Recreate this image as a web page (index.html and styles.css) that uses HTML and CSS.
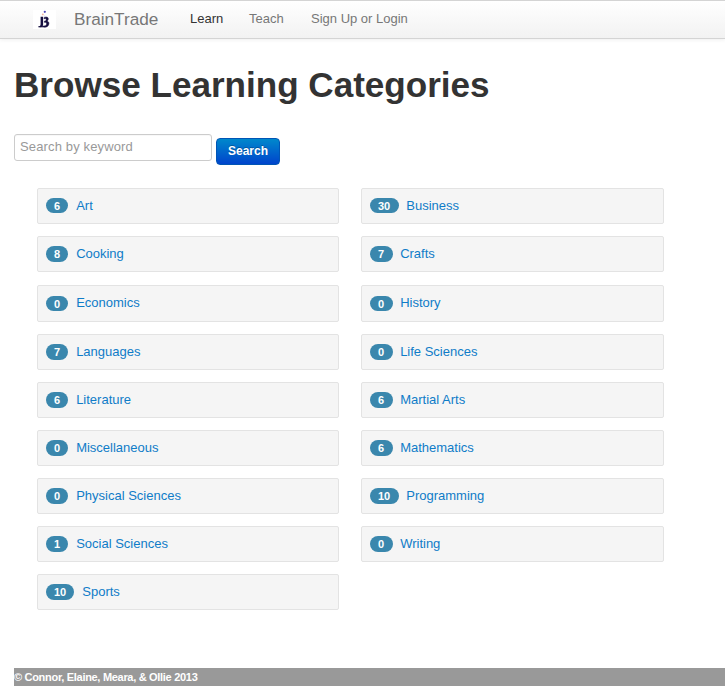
FILE: index.html
```html
<!DOCTYPE html>
<html lang="en">
<head>
<meta charset="utf-8">
<title>BrainTrade</title>
<link rel="stylesheet" href="styles.css">
</head>
<body>
<nav class="navbar">
  <svg class="logo" viewBox="0 0 23 19" aria-hidden="true">
    <rect width="23" height="19" fill="#fff"/>
    <path d="M7.6 6.7h2.5v7.8c0 2-1.7 3-4.2 2.6 1.1-.9 1.7-1.4 1.7-3z" fill="#160f40"/>
    <path d="M5.4 16.1h6.5v1.2H5.4z" fill="#160f40"/>
    <path d="M11 7.7c2-1.4 4.6-.7 4.3 1.4-.1 1-.7 1.6-1.3 2 1.4.4 2 1.3 1.9 2.6-.2 2.8-2.6 3.9-5.2 3.3v-1.2c1.5.4 2.8-.4 2.9-1.8.1-1.3-.8-1.8-2.2-1.6v-1.3c1.2-.1 1.8-.8 1.8-1.7 0-1-1-1.2-2.2-.5z" fill="#160f40" stroke="#160f40" stroke-width=".5"/>
    <circle cx="11.8" cy="1.8" r="1.1" fill="#4a43b5"/>
    <circle cx="9.8" cy="4.4" r=".9" fill="#f4b49c"/>
    <circle cx="11.5" cy="6.1" r=".7" fill="#c9cbea"/>
  </svg>
  <a class="brand">BrainTrade</a>
  <a class="nav-link active">Learn</a>
  <a class="nav-link teach">Teach</a>
  <a class="nav-link login">Sign Up or Login</a>
</nav>
<main>
  <h1><span>Browse Learning Categories</span></h1>
  <form class="search">
    <input type="text" placeholder="Search by keyword">
    <button type="button">Search</button>
  </form>
  <div class="categories">
    <a class="category first"><span class="badge">6</span><span class="name">Art</span></a>
    <a class="category first"><span class="badge">30</span><span class="name">Business</span></a>
    <a class="category"><span class="badge">8</span><span class="name">Cooking</span></a>
    <a class="category"><span class="badge">7</span><span class="name">Crafts</span></a>
    <a class="category tall"><span class="badge">0</span><span class="name">Economics</span></a>
    <a class="category tall"><span class="badge">0</span><span class="name">History</span></a>
    <a class="category"><span class="badge">7</span><span class="name">Languages</span></a>
    <a class="category"><span class="badge">0</span><span class="name">Life Sciences</span></a>
    <a class="category"><span class="badge">6</span><span class="name">Literature</span></a>
    <a class="category"><span class="badge">6</span><span class="name">Martial Arts</span></a>
    <a class="category"><span class="badge">0</span><span class="name">Miscellaneous</span></a>
    <a class="category"><span class="badge">6</span><span class="name">Mathematics</span></a>
    <a class="category"><span class="badge">0</span><span class="name">Physical Sciences</span></a>
    <a class="category"><span class="badge">10</span><span class="name">Programming</span></a>
    <a class="category"><span class="badge">1</span><span class="name">Social Sciences</span></a>
    <a class="category"><span class="badge">0</span><span class="name">Writing</span></a>
    <a class="category"><span class="badge">10</span><span class="name">Sports</span></a>
  </div>
</main>
<footer><span>© Connor, Elaine, Meara, &amp; Ollie 2013</span></footer>
</body>
</html>
```
FILE: styles.css
```css
* { box-sizing: border-box; }
body {
  margin: 0;
  height: 688px;
  overflow: hidden;
  background: #fff;
  color: #333;
  font: 13px/18px "Liberation Sans", Arial, sans-serif;
}
.navbar {
  display: flex;
  align-items: flex-start;
  height: 39px;
  padding-left: 33px;
  border-top: 1px solid #d4d4d4;
  border-bottom: 1px solid #d4d4d4;
  background: linear-gradient(#fff, #f2f2f2);
  box-shadow: 0 1px 4px rgba(0, 0, 0, .065);
}
.logo { width: 23px; height: 19px; margin-top: 9px; }
.brand { width: 134px; padding-left: 18px; color: #777; font-size: 17.2px; line-height: 36px; }
.nav-link { color: #777; line-height: 36px; white-space: nowrap; }
.nav-link.active { width: 59px; color: #333; }
.nav-link.teach { width: 62px; }
main { padding-left: 14px; }
h1 { margin: 25px 0 0; height: 70px; font-size: 35.1px; line-height: 42px; white-space: nowrap; }
.search { display: flex; align-items: flex-start; gap: 4px; height: 54px; }
.search input {
  width: 198px;
  height: 27px;
  padding: 0 5px 2px;
  border: 1px solid #ccc;
  border-radius: 3px;
  background: #fff;
  box-shadow: inset 0 1px 1px rgba(0, 0, 0, .03);
  font: 13px "Liberation Sans", Arial, sans-serif;
  letter-spacing: .14px;
}
.search input::placeholder { color: #999; opacity: 1; }
.search button {
  width: 64px;
  height: 27px;
  margin-top: 4px;
  padding: 0 0 1px;
  border: 1px solid #0055b5;
  border-radius: 4px;
  background: linear-gradient(#0088cc, #0044cc);
  color: #fff;
  font: bold 12px "Liberation Sans", Arial, sans-serif;
  text-shadow: 0 -1px 0 rgba(0, 0, 0, .25);
}
.categories {
  display: grid;
  grid-template-columns: 302px 303px;
  grid-template-rows: 48px 49px 49px;
  grid-auto-rows: 48px;
  column-gap: 22px;
  align-items: start;
  padding-left: 23px;
}
.category {
  display: flex;
  align-items: flex-start;
  gap: 8px;
  height: 36px;
  padding: 8px;
  border: 1px solid #e3e3e3;
  border-radius: 2px;
  background: #f5f5f5;
  color: #0f7cc8;
}
.category.tall { height: 37px; }
.badge {
  height: 16px;
  margin-top: 1px;
  padding: 0 8px;
  border-radius: 8px;
  background: #3a87ad;
  color: #fff;
  font-size: 11px;
  font-weight: bold;
  line-height: 16px;
}
.category:nth-child(even) { gap: 7.5px; }
.category:nth-child(even) .badge { padding-right: 8.5px; }
.first .badge, .tall .badge { height: 15px; }
.tall .badge { margin-top: 2px; }
footer {
  height: 18px;
  margin: 46px 0 0 14px;
  background: #999;
  color: #fff;
  font-size: 11px;
  font-weight: bold;
  letter-spacing: -.3px;
  line-height: 18px;
}
```
